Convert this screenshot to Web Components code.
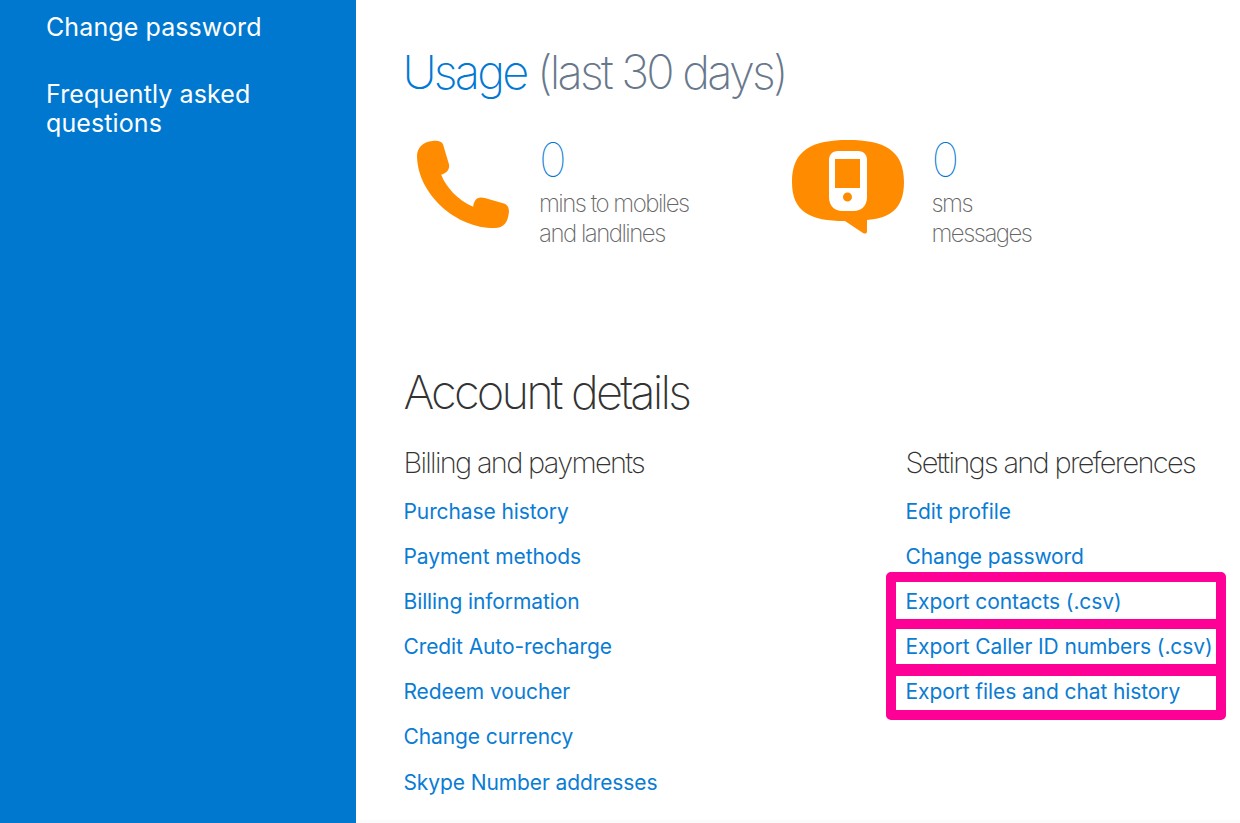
<!DOCTYPE html>
<html>
<head>
<meta charset="utf-8">
<title>Account</title>
<style>
    html, body {
        margin: 0;
        height: 100%;
        overflow: hidden;
        background: #fff;
        font-family: Inter, "Liberation Sans", sans-serif;
    }
</style>
</head>
<body>
<account-page>
    <side-nav slot="nav">
        <a>Change password</a>
        <a>Frequently asked<br>questions</a>
    </side-nav>
    <usage-panel slot="main"></usage-panel>
    <account-details slot="main"></account-details>
</account-page>

<script>
const ICONS = {
    phone: `<svg width="92" height="89" viewBox="0 0 95 90">
        <path fill="#ff8c00" d="M0 16C0 7 6 1 16 0C22-.5 26 1 27 4L33 24C34 29 31 33 25 35C30 48 42 61 58 68C59 60 63 57 70 59L88 64C93 65 95 68 95 73C94 84 90 90 80 90C40 90 1 55 0 16Z"/>
    </svg>`,
    sms: `<svg width="112" height="94" viewBox="0 0 112 94">
        <path fill="#ff8c00" fill-rule="evenodd" d="M56 0C92 0 112 10 112 42C112 70 97 78 75 80L75 91C75 94 73 94 71 93L53 81C18 81 0 72 0 42C0 10 20 0 56 0ZM46 11C40 11 37 15 37 20V57C37 66 43 71 50 71H62C69 71 75 66 75 57V20C75 15 72 11 66 11ZM43 19H68V48H43ZM55.500 52.500A4.500 4.500 0 1 0 55.500 61.500A4.500 4.500 0 1 0 55.500 52.500Z"/>
    </svg>`
};

const accountTemplate = document.createElement('template');
accountTemplate.innerHTML = `
<style>
    :host {
        display: grid;
        grid-template-columns: 356px 1fr;
        height: 823px;
    }
    main {
        padding: 44px 0 0 47.500px;
        box-shadow: inset 0 -3px 0 #fafafa;
        min-width: 0;
    }
</style>
<slot name="nav"></slot>
<main><slot name="main"></slot></main>
`;

class AccountPage extends HTMLElement {
    constructor() {
        super();
        this.attachShadow({mode: 'open'});
        this.shadowRoot.appendChild(accountTemplate.content.cloneNode(true));
    }
}

const navTemplate = document.createElement('template');
navTemplate.innerHTML = `
<style>
    :host {
        display: flex;
        flex-direction: column;
        gap: 38px;
        padding: 13px 0 0 46px;
        background: #0078d0;
        color: #fff;
        font-size: 25px;
        line-height: 29px;
        letter-spacing: 0.1px;
    }
    ::slotted(a) { display: block; }
</style>
<slot></slot>
`;

class SideNav extends HTMLElement {
    constructor() {
        super();
        this.attachShadow({mode: 'open'});
        this.shadowRoot.appendChild(navTemplate.content.cloneNode(true));
    }
}

const statTemplate = document.createElement('template');
statTemplate.innerHTML = `
<style>
    :host {
        display: flex;
    }
    .icon {
        width: var(--icon-width);
        padding-left: var(--icon-left);
        padding-top: var(--icon-top);
        box-sizing: border-box;
    }
    .num {
        font-size: 47px;
        font-weight: 100;
        line-height: 52px;
        color: #0078d4;
    }
    .label {
        margin-top: 3px;
        font-size: 24px;
        font-weight: 200;
        line-height: 30px;
        letter-spacing: -1.5px;
        color: #666;
    }
</style>
<div class="icon"><slot name="icon"></slot></div>
<div>
    <div class="num"><slot name="num"></slot></div>
    <div class="label"><slot name="label"></slot></div>
</div>
`;

class UsageStat extends HTMLElement {
    constructor() {
        super();
        this.attachShadow({mode: 'open'});
        this.shadowRoot.appendChild(statTemplate.content.cloneNode(true));
    }
}

const usageTemplate = document.createElement('template');
usageTemplate.innerHTML = `
<style>
    :host { display: block; }
    h1 {
        margin: 0 0 0 -1px;
        font-size: 47px;
        font-weight: 200;
        line-height: 56px;
        letter-spacing: -2.800px;
        color: #68788c;
    }
    h1 span { color: #0078d4; }
    .stats {
        display: flex;
        margin-top: 34px;
    }
    usage-stat:first-child { width: 388px; }
</style>
<h1><span>Usage</span> (last 30 days)</h1>
<div class="stats">
    <usage-stat style="--icon-width:135.500px;--icon-left:13.500px;--icon-top:6px">
        <span slot="icon">${ICONS.phone}</span>
        <span slot="num">0</span>
        <span slot="label">mins to mobiles<br>and landlines</span>
    </usage-stat>
    <usage-stat style="--icon-width:140px;--icon-left:0px;--icon-top:6px">
        <span slot="icon">${ICONS.sms}</span>
        <span slot="num">0</span>
        <span slot="label">sms<br>messages</span>
    </usage-stat>
</div>
`;

class UsagePanel extends HTMLElement {
    constructor() {
        super();
        this.attachShadow({mode: 'open'});
        this.shadowRoot.appendChild(usageTemplate.content.cloneNode(true));
    }
}

const columnTemplate = document.createElement('template');
columnTemplate.innerHTML = `
<style>
    :host {
        display: block;
        position: relative;
    }
    h3 {
        margin: 0 0 6.500px;
        font-size: 29px;
        font-weight: 200;
        line-height: 38px;
        letter-spacing: -1.700px;
        color: #333;
    }
    ::slotted(a) {
        display: block;
        height: 45.200px;
        line-height: 45.200px;
        font-size: 21px;
        letter-spacing: -0.1px;
        color: #0a7cd4;
        white-space: nowrap;
    }
</style>
<h3><slot name="title"></slot></h3>
<slot></slot>
<slot name="overlay"></slot>
`;

class LinkColumn extends HTMLElement {
    constructor() {
        super();
        this.attachShadow({mode: 'open'});
        this.shadowRoot.appendChild(columnTemplate.content.cloneNode(true));
    }
}

const detailsTemplate = document.createElement('template');
detailsTemplate.innerHTML = `
<style>
    :host {
        display: block;
        margin-top: 112px;
    }
    h2 {
        margin: 0 0 21px;
        font-size: 47px;
        font-weight: 200;
        line-height: 62px;
        letter-spacing: -2.850px;
        color: #333;
    }
    .cols {
        display: grid;
        grid-template-columns: 502px 1fr;
    }
    .frame {
        position: absolute;
        left: -20px;
        top: 128px;
        width: 340px;
        height: 148px;
        box-sizing: border-box;
        pointer-events: none;
        border: 10px solid #ff0097;
        border-radius: 5px;
    }
    .frame i {
        position: absolute;
        left: 0;
        right: 0;
        background: #ff0097;
    }
</style>
<h2>Account details</h2>
<div class="cols">
    <link-column>
        <span slot="title">Billing and payments</span>
        <a>Purchase history</a>
        <a>Payment methods</a>
        <a>Billing information</a>
        <a>Credit Auto-recharge</a>
        <a>Redeem voucher</a>
        <a>Change currency</a>
        <a>Skype Number addresses</a>
    </link-column>
    <link-column>
        <span slot="title">Settings and preferences</span>
        <a>Edit profile</a>
        <a>Change password</a>
        <a>Export contacts (.csv)</a>
        <a>Export Caller ID numbers (.csv)</a>
        <a>Export files and chat history</a>
        <div class="frame" slot="overlay">
            <i style="top:37px;height:10px"></i>
            <i style="top:82px;height:12px"></i>
        </div>
    </link-column>
</div>
`;

class AccountDetails extends HTMLElement {
    constructor() {
        super();
        this.attachShadow({mode: 'open'});
        this.shadowRoot.appendChild(detailsTemplate.content.cloneNode(true));
    }
}

customElements.define('account-page', AccountPage);
customElements.define('side-nav', SideNav);
customElements.define('usage-stat', UsageStat);
customElements.define('usage-panel', UsagePanel);
customElements.define('link-column', LinkColumn);
customElements.define('account-details', AccountDetails);
</script>
</body>
</html>
